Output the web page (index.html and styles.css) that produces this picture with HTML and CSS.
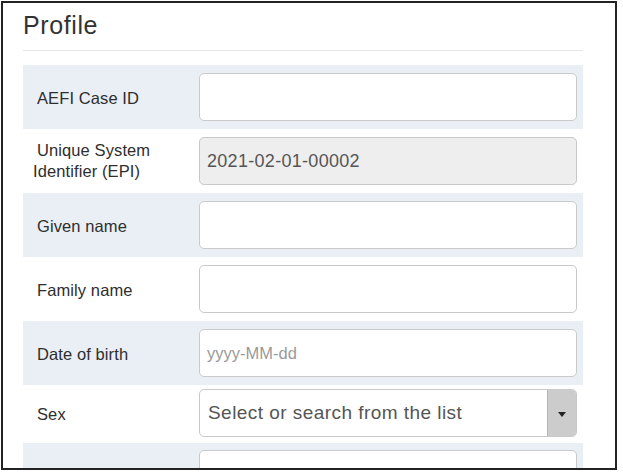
FILE: index.html
```html
<!DOCTYPE html>
<html>
<head>
<meta charset="utf-8">
<link rel="stylesheet" href="styles.css">
</head>
<body>
<div class="frame">
  <div class="panel">
    <h2 class="title">Profile</h2>
    <div class="rule"></div>
    <div class="rows">
      <div class="row shaded">
        <label class="lbl">AEFI Case ID</label>
        <input class="inp" type="text">
      </div>
      <div class="row">
        <label class="lbl lbl-wrap">Unique System Identifier (EPI)</label>
        <input class="inp inp-ro" type="text" value="2021-02-01-00002" readonly>
      </div>
      <div class="row shaded">
        <label class="lbl">Given name</label>
        <input class="inp" type="text">
      </div>
      <div class="row">
        <label class="lbl">Family name</label>
        <input class="inp" type="text">
      </div>
      <div class="row shaded">
        <label class="lbl">Date of birth</label>
        <input class="inp" type="text" placeholder="yyyy-MM-dd">
      </div>
      <div class="row row-sel">
        <label class="lbl">Sex</label>
        <div class="select">
          <span class="select-text">Select or search from the list</span>
          <span class="select-btn"><i class="caret"></i></span>
        </div>
      </div>
      <div class="row shaded row-last">
        <label class="lbl"></label>
        <input class="inp" type="text">
      </div>
    </div>
  </div>
</div>
</body>
</html>
```

FILE: styles.css
```css
html, body {
  margin: 0;
  padding: 0;
  background: #fff;
}
body {
  font-family: "Liberation Sans", Arial, sans-serif;
  color: #333;
}
.frame {
  box-sizing: border-box;
  margin: 1px 0 0 1px;
  width: 616px;
  height: 469px;
  border: 2px solid #222;
  overflow: hidden;
  background: #fff;
}
.panel {
  padding: 7px 0 0 20px;
  width: 560px;
}
.title {
  margin: 0;
  font-size: 25px;
  line-height: 30px;
  font-weight: normal;
  letter-spacing: 0.6px;
  color: #333;
}
.rule {
  margin-top: 10px;
  height: 1px;
  background: #e6e6e6;
}
.rows {
  margin-top: 14px;
  display: flex;
  flex-direction: column;
}
.row {
  height: 64px;
  display: grid;
  grid-template-columns: 176px 378px;
  align-items: center;
}
.shaded {
  background: #eaeff6;
}
.lbl {
  padding-left: 14px;
  font-size: 16.5px;
  letter-spacing: 0.1px;
  line-height: 21px;
  color: #2e2e2e;
  padding-top: 2px;
}
.lbl-wrap {
  padding-left: 10px;
  padding-right: 20px;
  text-indent: 4px;
  padding-top: 0;
}
.inp {
  box-sizing: border-box;
  height: 48px;
  width: 378px;
  margin: 0;
  padding: 0 7px;
  border: 1px solid #c9c9c9;
  border-radius: 5px;
  background: #fff;
  font-family: "Liberation Sans", Arial, sans-serif;
  font-size: 18px;
  letter-spacing: 0.3px;
  color: #555;
  outline: none;
}
.inp::placeholder {
  color: #9a9a9a;
  font-size: 16.5px;
  letter-spacing: 0;
}
.inp-ro {
  background: #eee;
}
.row-sel {
  height: 58px;
  align-items: start;
}
.row-sel .lbl {
  align-self: center;
  padding-top: 0;
}
.select {
  box-sizing: border-box;
  margin-top: 4px;
  height: 48px;
  width: 378px;
  display: flex;
  border: 1px solid #c9c9c9;
  border-radius: 5px;
  overflow: hidden;
  background: #fff;
}
.select-text {
  flex: 1;
  display: flex;
  align-items: center;
  padding-left: 8px;
  font-size: 19px;
  letter-spacing: 0.45px;
  color: #555;
  white-space: nowrap;
  overflow: hidden;
}
.select-btn {
  width: 28px;
  display: flex;
  align-items: center;
  justify-content: center;
  background: #cccccc;
  border-left: 1px solid #b5b5b5;
}
.caret {
  width: 0;
  height: 0;
  border-left: 4.5px solid transparent;
  border-right: 4.5px solid transparent;
  border-top: 5px solid #222;
  margin-top: 2px;
}
.row-last {
  align-items: start;
}
.row-last .inp {
  margin-top: 7px;
}
```
